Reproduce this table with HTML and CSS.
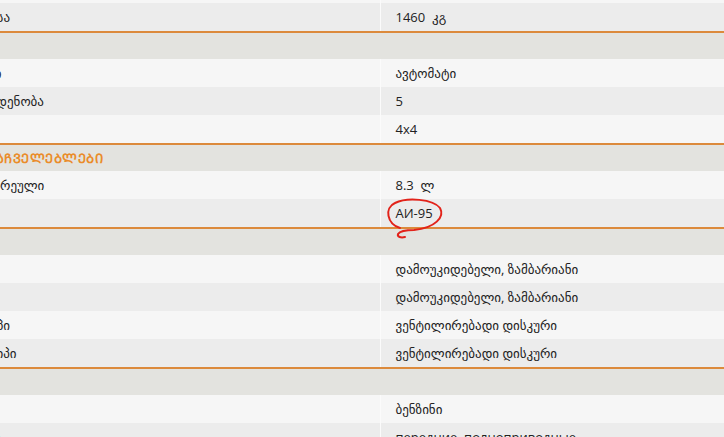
FILE: index.html
```html
<!DOCTYPE html>
<html lang="ka">
<head>
  <meta charset="UTF-8" />
  <title>მახასიათებლები</title>
  <link rel="stylesheet" href="styles.css">
</head>
<body>
  <div class="page">
    <table class="specs">
      <colgroup><col class="label-col"><col class="value-col"></colgroup>
      <tr class="light"><td>საწვავის ავზი</td><td>60  ლ</td></tr>
      <tr class="dark"><td>ავტომობილის მასა</td><td>1460  <span class="unit">კგ</span></td></tr>

      <tr class="group"><th colspan="2">ᲒᲐᲓᲐᲪᲔᲛᲐ</th></tr>
      <tr class="light"><td>ტრანსმისიის ტიპი</td><td>ავტომატი</td></tr>
      <tr class="dark"><td>გადაცემათა რაოდენობა</td><td>5</td></tr>
      <tr class="light"><td>წამყვანი</td><td>4x4</td></tr>

      <tr class="group"><th colspan="2">ᲓᲘᲜᲐᲛᲘᲙᲣᲠᲘ ᲛᲐᲩᲕᲔᲚᲔᲑᲚᲔᲑᲘ</th></tr>
      <tr class="light"><td>საწვავის ხარჯი შერეული</td><td>8.3  <span class="unit">ლ</span></td></tr>
      <tr class="dark"><td>საწვავი</td><td>АИ-95</td></tr>

      <tr class="group"><th colspan="2">ᲨᲐᲡᲘ</th></tr>
      <tr class="light"><td>წინა საკიდი</td><td>დამოუკიდებელი, ზამბარიანი</td></tr>
      <tr class="dark"><td>უკანა საკიდი</td><td>დამოუკიდებელი, ზამბარიანი</td></tr>
      <tr class="light"><td>წინა მუხრუჭის ტიპი</td><td>ვენტილირებადი დისკური</td></tr>
      <tr class="dark"><td>უკანა მუხრუჭის ტიპი</td><td>ვენტილირებადი დისკური</td></tr>

      <tr class="group"><th colspan="2">ᲫᲠᲐᲕᲐ</th></tr>
      <tr class="light"><td>ძრავის ტიპი</td><td>ბენზინი</td></tr>
      <tr class="dark"><td>ამძრავის სახეობა</td><td>передние, полноприводные</td></tr>
    </table>

    <svg class="mark" width="70" height="50" viewBox="0 0 70 50">
      <path d="M17 31 C4 27, 1 11, 12 6 C24 0, 50 2, 57 11 C62 20, 52 31, 31 33 C23 33, 17 34, 15 37 C14 40, 18 41, 22 40"
            fill="none" stroke="#e2231a" stroke-width="2" stroke-linecap="round"/>
    </svg>
  </div>
</body>
</html>
```

FILE: styles.css
```css
body { margin: 0; background: #f6f6f6; font-family: "Open Sans", "DejaVu Sans", sans-serif; font-size: 13px; color: #222; overflow: hidden; }
.page { position: relative; height: 437px; overflow: hidden; }
.specs { border-collapse: collapse; margin: -25px 0 0 -125px; width: 849px; table-layout: fixed; }
.label-col { width: 505px; }
.specs td { height: 28px; padding: 0 0 0 15px; vertical-align: middle; white-space: pre; overflow: hidden; }
.specs td:first-child { border-right: 1px solid #fbfbfb; }
.specs .light td { background: #f6f6f6; }
.specs .dark td { background: #ececec; }
.specs .group th { height: 26px; padding: 0 0 0 15px; background: #e3e3df; border-top: 2px solid #dc8a3c; text-align: left; color: #ea8c2a; font-weight: bold; font-family: "DejaVu Sans", sans-serif; font-size: 13px; letter-spacing: 0.5px; white-space: pre; }
.unit { font-family: "DejaVu Sans", sans-serif; font-size: 13px; }
.mark { position: absolute; left: 383px; top: 197px; }
```
